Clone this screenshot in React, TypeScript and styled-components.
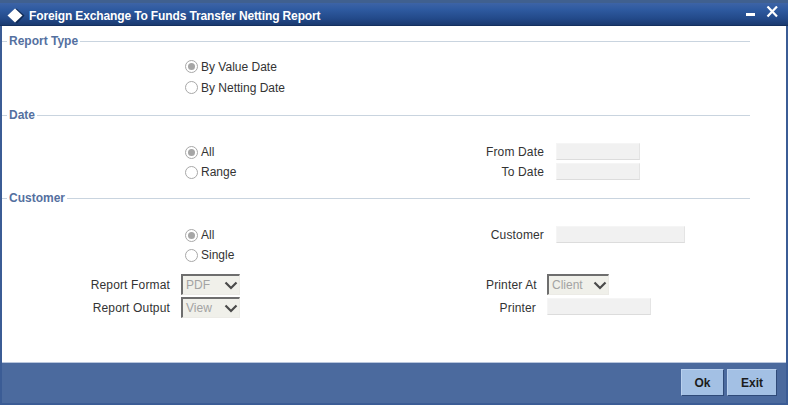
import React from "react";
import styled, { createGlobalStyle } from "styled-components";

const Global = createGlobalStyle`
  html, body { margin: 0; padding: 0; background: #fff; }
  #root { width: 788px; height: 405px; overflow: hidden; }
`;

const Window = styled.div`
  width: 788px;
  height: 405px;
  box-sizing: border-box;
  display: flex;
  flex-direction: column;
  font-family: "Liberation Sans", Arial, sans-serif;
  font-size: 12px;
  color: #333;
  background: #3b5c95;
  border-left: 2px solid #3b5c95;
  border-right: 2px solid #3b5c95;
`;

const TitleBar = styled.header`
  height: 26px;
  flex: none;
  margin: 0 -2px;
  box-sizing: border-box;
  display: flex;
  align-items: center;
  padding: 3px 10px 0 7px;
  gap: 4px;
  background: linear-gradient(#3d64a6 0, #2e5aa0 30%, #234a8a 70%, #1a3a70 100%);
  border-top: 3px solid #40608f;
  border-bottom: 1px solid #14305f;
  color: #fff;
`;

const TitleText = styled.h1`
  margin: 0;
  font-size: 12px;
  font-weight: 700;
  letter-spacing: -0.13px;
  flex: 1;
  color: #fff;
`;

const Body = styled.main`
  flex: 1;
  background: #fff;
  display: flex;
  flex-direction: column;
  padding-top: 7px;
  border-bottom: 1px solid #b9c6dd;
`;

const Section = styled.section`
  display: flex;
  flex-direction: column;
`;

const Legend = styled.div<{ $top?: number }>`
  height: 16px;
  margin-top: ${(p) => p.$top ?? 0}px;
  display: flex;
  align-items: center;
  width: 748px;
  font-weight: 700;
  color: #54709f;
  gap: 2px;
  &::before {
    content: "";
    width: 5px;
    height: 1px;
    background: #c9d4df;
  }
  &::after {
    content: "";
    flex: 1;
    height: 1px;
    background: #c9d4df;
  }
`;

const Row = styled.div<{ $h?: number; $top?: number }>`
  display: grid;
  grid-template-columns: 183px 300px 1fr;
  align-items: center;
  height: ${(p) => p.$h ?? 21}px;
  margin-top: ${(p) => p.$top ?? 0}px;
`;

const FormatRow = styled.div<{ $top?: number }>`
  display: grid;
  grid-template-columns: 168px 11px 59px 246px 50px 11px 1fr;
  grid-template-rows: 1fr;
  align-items: center;
  height: 23px;
  margin-top: ${(p) => p.$top ?? 0}px;
`;

const RadioLabel = styled.label`
  grid-column: 2;
  display: flex;
  align-items: center;
  gap: 3px;
`;

const Dot = styled.span<{ $on?: boolean }>`
  width: 13px;
  height: 13px;
  box-sizing: border-box;
  border-radius: 50%;
  border: 1px solid #a8a8a8;
  background: #fff;
  display: flex;
  align-items: center;
  justify-content: center;
  &::after {
    content: "";
    width: 7px;
    height: 7px;
    border-radius: 50%;
    background: ${(p) => (p.$on ? "#a6a6a6" : "transparent")};
  }
`;

const FieldLabel = styled.span`
  text-align: right;
  letter-spacing: 0.15px;
  white-space: nowrap;
`;

const RightField = styled.div`
  display: grid;
  grid-template-columns: 59px 12px 1fr;
  align-items: center;
`;

const Input = styled.div<{ $w: number }>`
  width: ${(p) => p.$w}px;
  height: 17px;
  margin-bottom: 1px;
  box-sizing: border-box;
  background: #f1f1f1;
  border-right: 1px solid #e4e4e4;
  border-bottom: 1px solid #dcdcdc;
  border-top: 1px solid #f5f5f5;
  border-left: 1px solid #f5f5f5;
`;

const PrinterInput = styled(Input)`
  margin-bottom: 2px;
`;

const Select = styled.div<{ $w: number }>`
  width: ${(p) => p.$w}px;
  height: 21px;
  box-sizing: border-box;
  background: #f0f0ea;
  border-top: 2px solid #6e6e6e;
  border-left: 2px solid #6e6e6e;
  border-right: 1px solid #ecebe6;
  border-bottom: 1px solid #ecebe6;
  color: #a3a3a3;
  display: flex;
  align-items: center;
  justify-content: space-between;
  padding: 0 1px 0 3px;
  font-size: 12px;
`;

const Footer = styled.footer`
  flex: none;
  height: 42px;
  box-sizing: border-box;
  background: #4b6a9e;
  border-bottom: 2px solid #3b5c95;
  display: flex;
  justify-content: flex-end;
  align-items: flex-start;
  gap: 3px;
  padding: 6px 9px 0 0;
`;

const Button = styled.button`
  width: 43px;
  height: 27px;
  padding: 0;
  font: 700 12px "Liberation Sans", Arial, sans-serif;
  color: #1c1c1c;
  background: #a3c0e4;
  border: 1px solid;
  border-color: #b9d0ee #2f4a78 #2f4a78 #b9d0ee;
  &:last-child {
    width: 50px;
  }
`;

const Chevron = () => (
  <svg width="14" height="9" viewBox="0 0 14 9" fill="none" aria-hidden="true">
    <path d="M1.5 1.5 L7 7 L12.5 1.5" stroke="#4a4a4a" strokeWidth="2.2" />
  </svg>
);

const Diamond = () => (
  <svg width="18" height="16" viewBox="0 0 18 16" aria-hidden="true">
    <path d="M9.5 0.5 L17.5 7.5 L10 15.5 L3 9 Z" fill="#0f2a55" />
    <path d="M8 0.5 L15.5 7.5 L8 14.5 L0.5 7.5 Z" fill="#fff" />
  </svg>
);

const WinControls = () => (
  <svg width="33" height="14" viewBox="0 0 33 14" fill="none" aria-hidden="true" style={{ marginTop: -6 }}>
    <rect x="1" y="7" width="9" height="3" fill="#fff" />
    <path d="M22.5 0.5 L32 10.5 M32 0.5 L22.5 10.5" stroke="#fff" strokeWidth="2.2" />
  </svg>
);

const Radio = ({ on, children }: { on?: boolean; children: React.ReactNode }) => (
  <RadioLabel>
    <Dot $on={on} />
    {children}
  </RadioLabel>
);

const Right = ({ label, w }: { label: string; w: number }) => (
  <RightField>
    <FieldLabel>{label}</FieldLabel>
    <span />
    <Input $w={w} />
  </RightField>
);

export default function App() {
  return (
    <>
      <Global />
      <Window>
        <TitleBar>
          <Diamond />
          <TitleText>Foreign Exchange To Funds Transfer Netting Report</TitleText>
          <WinControls />
        </TitleBar>
        <Body>
          <Section>
            <Legend>Report Type</Legend>
            <Row $top={7}>
              <Radio on>By Value Date</Radio>
            </Row>
            <Row>
              <Radio>By Netting Date</Radio>
            </Row>
          </Section>
          <Section>
            <Legend $top={9}>Date</Legend>
            <Row $top={19} $h={20}>
              <Radio on>All</Radio>
              <Right label="From Date" w={84} />
            </Row>
            <Row $h={20}>
              <Radio>Range</Radio>
              <Right label="To Date" w={84} />
            </Row>
          </Section>
          <Section>
            <Legend $top={8}>Customer</Legend>
            <Row $top={19} $h={20}>
              <Radio on>All</Radio>
              <Right label="Customer" w={129} />
            </Row>
            <Row $h={20}>
              <Radio>Single</Radio>
            </Row>
            <FormatRow $top={8}>
              <FieldLabel>Report Format</FieldLabel>
              <span />
              <Select $w={59}>PDF<Chevron /></Select>
              <span />
              <FieldLabel>Printer At</FieldLabel>
              <span />
              <Select $w={62}>Client<Chevron /></Select>
            </FormatRow>
            <FormatRow>
              <FieldLabel>Report Output</FieldLabel>
              <span />
              <Select $w={59}>View<Chevron /></Select>
              <span />
              <FieldLabel>Printer</FieldLabel>
              <span />
              <PrinterInput $w={104} />
            </FormatRow>
          </Section>
        </Body>
        <Footer>
          <Button>Ok</Button>
          <Button>Exit</Button>
        </Footer>
      </Window>
    </>
  );
}
